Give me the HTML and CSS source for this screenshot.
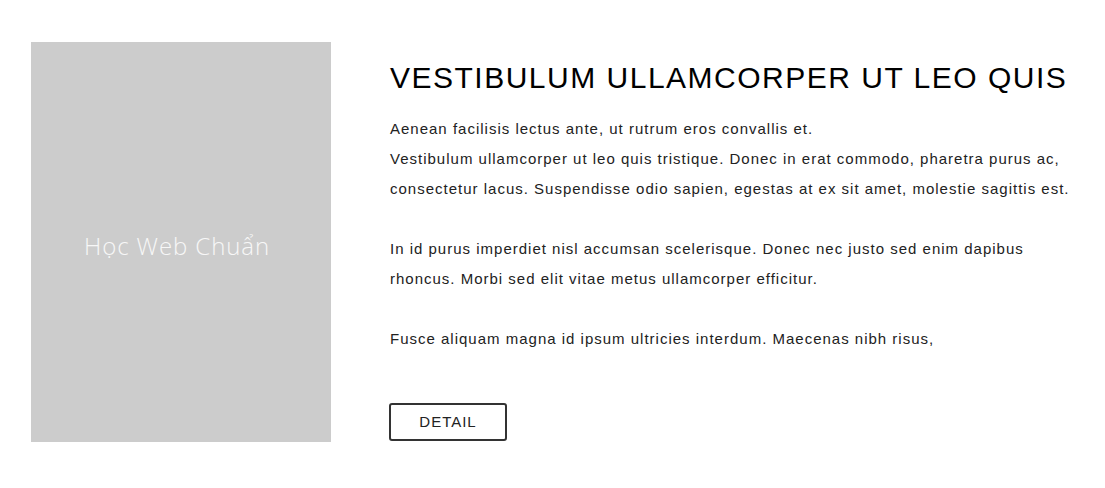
FILE: index.html
```html
<!DOCTYPE html>
<html lang="vi">
<head>
<meta charset="utf-8">
<title>Học Web Chuẩn</title>
<link rel="stylesheet" href="styles.css">
</head>
<body>
<section class="feature">
  <div class="thumb"><span class="thumb-label">Học Web Chuẩn</span></div>
  <div class="content">
    <h2 class="title">VESTIBULUM ULLAMCORPER UT LEO QUIS</h2>
    <p class="text">Aenean facilisis lectus ante, ut rutrum eros convallis et.<br>Vestibulum ullamcorper ut leo quis tristique. Donec in erat commodo, pharetra purus ac, consectetur lacus. Suspendisse odio sapien, egestas at ex sit amet, molestie sagittis est.</p>
    <p class="text">In id purus imperdiet nisl accumsan scelerisque. Donec nec justo sed enim dapibus rhoncus. Morbi sed elit vitae metus ullamcorper efficitur.</p>
    <p class="text">Fusce aliquam magna id ipsum ultricies interdum. Maecenas nibh risus,</p>
    <a class="btn" href="#">DETAIL</a>
  </div>
</section>
</body>
</html>
```

FILE: styles.css
```css
html, body {
  margin: 0;
  padding: 0;
  background: #fff;
}
body {
  font-family: "Liberation Sans", Arial, sans-serif;
  color: #222;
}
.feature {
  display: flex;
  align-items: flex-start;
  gap: 59px;
  padding: 42px 22px 0 31px;
}
.thumb {
  flex: 0 0 300px;
  height: 400px;
  box-sizing: border-box;
  padding: 6px 8px 0 0;
  background: #cccccc;
  display: flex;
  align-items: center;
  justify-content: center;
}
.thumb-label {
  font-family: "Open Sans", sans-serif;
  font-weight: 300;
  font-size: 24px;
  letter-spacing: 0.9px;
  color: #f7f7f7;
}
.content {
  flex: 1;
  min-width: 0;
}
.title {
  margin: 18px 0 18px;
  font-weight: 400;
  font-size: 30px;
  line-height: 36px;
  letter-spacing: 1.5px;
  color: #000;
}
.text {
  margin: 0 0 30px;
  font-size: 15px;
  line-height: 30px;
  letter-spacing: 1px;
}
.btn {
  display: inline-block;
  margin: 19px 0 0 -1px;
  width: 114px;
  height: 34px;
  border: 2px solid #333;
  border-radius: 3px;
  box-sizing: content-box;
  text-align: center;
  line-height: 34px;
  font-size: 15px;
  letter-spacing: 1px;
  color: #222;
  text-decoration: none;
}
```
